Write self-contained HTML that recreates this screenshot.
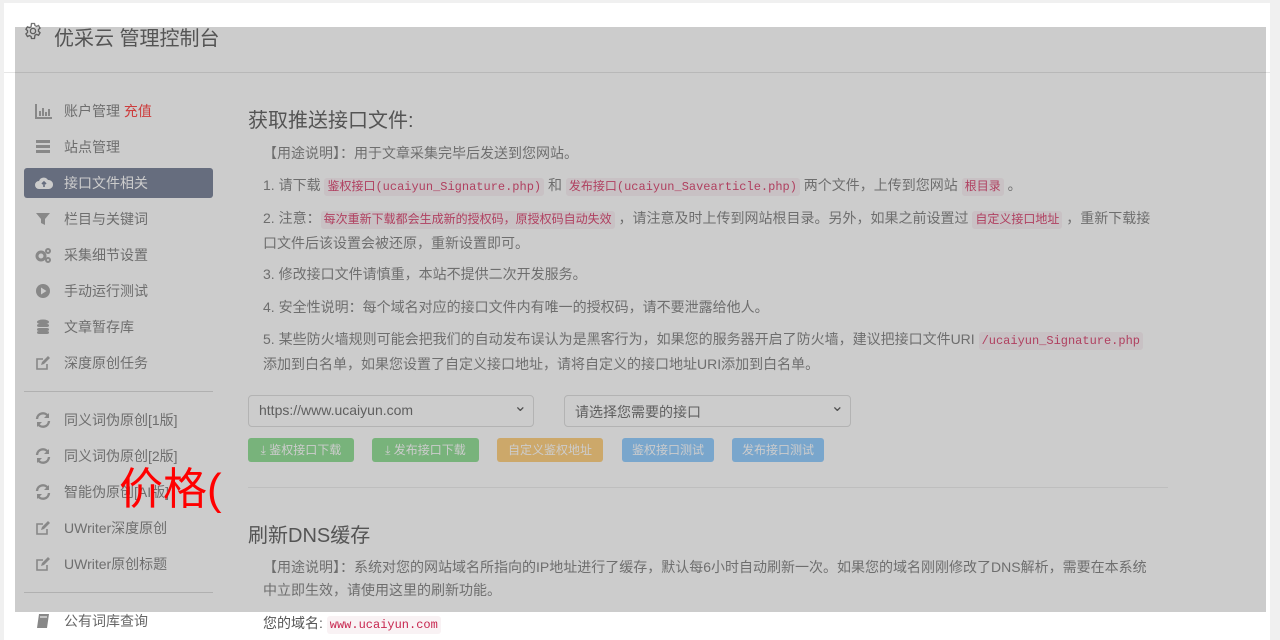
<!DOCTYPE html>
<html><head><meta charset="utf-8"><style>
*{margin:0;padding:0;box-sizing:border-box}
body{width:1280px;height:640px;overflow:hidden;background:#f0f0f0;font-family:"Liberation Sans","Noto Sans CJK SC",sans-serif;position:relative}
.card{position:absolute;left:4px;top:3px;width:1266px;height:637px;background:#fff;overflow:hidden}
.hdr{position:absolute;left:0;top:0;width:1266px;height:70px;border-bottom:1px solid #e6e6e6}
.title{position:absolute;left:50px;top:19px;font-size:20px;color:#6a6a6a}
.gear{position:absolute;left:20px;top:19px}
.nav{position:absolute;left:20px;width:189px;height:30px;font-size:14px;color:#8a8a8a;line-height:30px;padding-left:40px}
.nav svg{position:absolute;left:11px;top:7px}
.nav.act{background:#80899e;color:#fff;border-radius:3px}
.sep{position:absolute;left:20px;width:189px;border-top:1px solid #ddd}
.main{position:absolute;left:0;top:0;color:#8a8a8a;font-size:14px}
h3{position:absolute;left:244px;font-weight:normal;font-size:20px;color:#6a6a6a}
code{font-family:"Liberation Mono","Noto Sans CJK SC",monospace;font-size:12px;color:#dc5078;background:#faf2f5;padding:2px 3px;border-radius:3px}
.p{position:absolute;left:259px;width:890px;line-height:23px}
.sel{position:absolute;top:392px;height:32px;border:1px solid #e0e0e0;border-radius:4px;font-size:14px;color:#777;padding:6px 10px;background:#fff}
.sel:after{content:"⌄";position:absolute;right:6px;top:0px;font-size:16px;color:#666}
.btn{position:absolute;top:435px;height:24px;border-radius:3px;color:#fff;font-size:12px;line-height:24px;text-align:center}
.ov{position:absolute;left:15px;top:27px;width:1251px;height:585px;background:rgba(0,0,0,.2)}
</style></head><body>
<div class="card">
<div class="hdr">
<svg class="gear" width="18" height="18" viewBox="0 0 24 24" fill="none" stroke="#777" stroke-width="1.8"><circle cx="12" cy="12" r="3.5"/><path d="M10 2h4l.6 2.8 2.2 1.1 2.6-1.2 2 3.4-2.1 1.9v2.4l2.1 1.9-2 3.4-2.6-1.2-2.2 1.1L14 22h-4l-.6-2.8-2.2-1.1-2.6 1.2-2-3.4 2.1-1.9v-2.4L2.6 9.7l2-3.4 2.6 1.2 2.2-1.1z"/></svg>
<div class="title">优采云 管理控制台</div>
</div>
<div class="nav" style="top:93px"><svg width="18" height="16"><path d="M1 1v14h16M5 13V8M8 13V5M11 13V9M14 13V6" stroke="#aaa" stroke-width="2" fill="none"/></svg>账户管理 <span style="color:#ff4d4d">充值</span></div>
<div class="nav" style="top:129px"><svg width="16" height="16"><rect x="1" y="1" width="14" height="3" fill="#aaa"/><rect x="1" y="6" width="14" height="3" fill="#aaa"/><rect x="1" y="11" width="14" height="3" fill="#aaa"/></svg>站点管理</div>
<div class="nav act" style="top:165px"><svg width="18" height="16"><path d="M4 14a4 4 0 0 1 0-8 5 5 0 0 1 9-1 4.5 4.5 0 0 1 1 9z" fill="#fff"/><path d="M9 12V7M7 9l2-2 2 2" stroke="#80899e" stroke-width="1.6" fill="none"/></svg>接口文件相关</div>
<div class="nav" style="top:201px"><svg width="16" height="16"><path d="M1 2h14l-5 6v6l-4-2V8z" fill="#aaa"/></svg>栏目与关键词</div>
<div class="nav" style="top:237px"><svg width="18" height="16"><circle cx="6" cy="9" r="4" fill="none" stroke="#aaa" stroke-width="3"/><circle cx="13" cy="4" r="2" fill="none" stroke="#aaa" stroke-width="2"/><circle cx="13" cy="13" r="2" fill="none" stroke="#aaa" stroke-width="2"/></svg>采集细节设置</div>
<div class="nav" style="top:273px"><svg width="16" height="16"><circle cx="8" cy="8" r="7" fill="#aaa"/><path d="M6 4.5v7l5.5-3.5z" fill="#fff"/></svg>手动运行测试</div>
<div class="nav" style="top:309px"><svg width="16" height="16"><ellipse cx="8" cy="3" rx="6" ry="2.5" fill="#aaa"/><rect x="2" y="5" width="12" height="3" rx="2" fill="#aaa"/><rect x="2" y="9" width="12" height="3" rx="2" fill="#aaa"/><rect x="2" y="12" width="12" height="3" rx="2" fill="#aaa"/></svg>文章暂存库</div>
<div class="nav" style="top:345px"><svg width="16" height="16"><path d="M12 9v5H2V4h6" stroke="#aaa" stroke-width="1.6" fill="none"/><path d="M6 10l1-3 6-6 2 2-6 6z" fill="#aaa"/></svg>深度原创任务</div>
<div class="sep" style="top:388px"></div>
<div class="nav" style="top:402px"><svg width="16" height="16"><path d="M2 7a6 6 0 0 1 11-3M14 9a6 6 0 0 1-11 3" stroke="#aaa" stroke-width="2.4" fill="none"/><path d="M14 1v5h-5zM2 15v-5h5z" fill="#aaa"/></svg>同义词伪原创[1版]</div>
<div class="nav" style="top:438px"><svg width="16" height="16"><path d="M2 7a6 6 0 0 1 11-3M14 9a6 6 0 0 1-11 3" stroke="#aaa" stroke-width="2.4" fill="none"/><path d="M14 1v5h-5zM2 15v-5h5z" fill="#aaa"/></svg>同义词伪原创[2版]</div>
<div class="nav" style="top:474px"><svg width="16" height="16"><path d="M2 7a6 6 0 0 1 11-3M14 9a6 6 0 0 1-11 3" stroke="#aaa" stroke-width="2.4" fill="none"/><path d="M14 1v5h-5zM2 15v-5h5z" fill="#aaa"/></svg>智能伪原创[AI版]</div>
<div class="nav" style="top:510px"><svg width="16" height="16"><path d="M12 9v5H2V4h6" stroke="#aaa" stroke-width="1.6" fill="none"/><path d="M6 10l1-3 6-6 2 2-6 6z" fill="#aaa"/></svg>UWriter深度原创</div>
<div class="nav" style="top:546px"><svg width="16" height="16"><path d="M12 9v5H2V4h6" stroke="#aaa" stroke-width="1.6" fill="none"/><path d="M6 10l1-3 6-6 2 2-6 6z" fill="#aaa"/></svg>UWriter原创标题</div>
<div class="sep" style="top:589px"></div>
<div class="nav" style="top:603px;color:#666"><svg width="16" height="16"><path d="M4 1h10l-2 14H2z" fill="#888"/><path d="M5 4h7" stroke="#fff"/></svg>公有词库查询</div>

<h3 style="top:101px">获取推送接口文件:</h3>
<div class="main">
<div class="p" style="top:139px">【用途说明】：用于文章采集完毕后发送到您网站。</div>
<div class="p" style="top:171px">1. 请下载 <code>鉴权接口(ucaiyun_Signature.php)</code> 和 <code>发布接口(ucaiyun_Savearticle.php)</code> 两个文件，上传到您网站 <code>根目录</code> 。</div>
<div class="p" style="top:204px">2. 注意：<code>每次重新下载都会生成新的授权码，原授权码自动失效</code> ，请注意及时上传到网站根目录。另外，如果之前设置过 <code>自定义接口地址</code> ，重新下载接口文件后该设置会被还原，重新设置即可。</div>
<div class="p" style="top:260px">3. 修改接口文件请慎重，本站不提供二次开发服务。</div>
<div class="p" style="top:293px">4. 安全性说明：每个域名对应的接口文件内有唯一的授权码，请不要泄露给他人。</div>
<div class="p" style="top:325px">5. 某些防火墙规则可能会把我们的自动发布误认为是黑客行为，如果您的服务器开启了防火墙，建议把接口文件URI <code>/ucaiyun_Signature.php</code> 添加到白名单，如果您设置了自定义接口地址，请将自定义的接口地址URI添加到白名单。</div>
</div>
<div class="sel" style="left:244px;width:286px">https://www.ucaiyun.com</div>
<div class="sel" style="left:560px;width:287px">请选择您需要的接口</div>
<div class="btn" style="left:244px;width:106px;background:#97e09a">⤓ 鉴权接口下载</div>
<div class="btn" style="left:368px;width:107px;background:#97e09a">⤓ 发布接口下载</div>
<div class="btn" style="left:493px;width:106px;background:#ffd285">自定义鉴权地址</div>
<div class="btn" style="left:618px;width:92px;background:#98d0ff">鉴权接口测试</div>
<div class="btn" style="left:728px;width:92px;background:#98d0ff">发布接口测试</div>
<div style="position:absolute;left:244px;top:484px;width:920px;border-top:1px solid #eee"></div>
<h3 style="top:516px">刷新DNS缓存</h3>
<div class="main"><div class="p" style="top:553px;width:885px">【用途说明】：系统对您的网站域名所指向的IP地址进行了缓存，默认每6小时自动刷新一次。如果您的域名刚刚修改了DNS解析，需要在本系统中立即生效，请使用这里的刷新功能。</div>
<div class="p" style="top:609px;color:#555">您的域名: <code style="color:#c7254e;background:#f9f2f4">www.ucaiyun.com</code></div></div>
</div>
<div class="ov"></div>
<div style="position:absolute;left:119px;top:464px;font-size:44px;color:#f00;line-height:52px">价格(</div>
</body></html>
